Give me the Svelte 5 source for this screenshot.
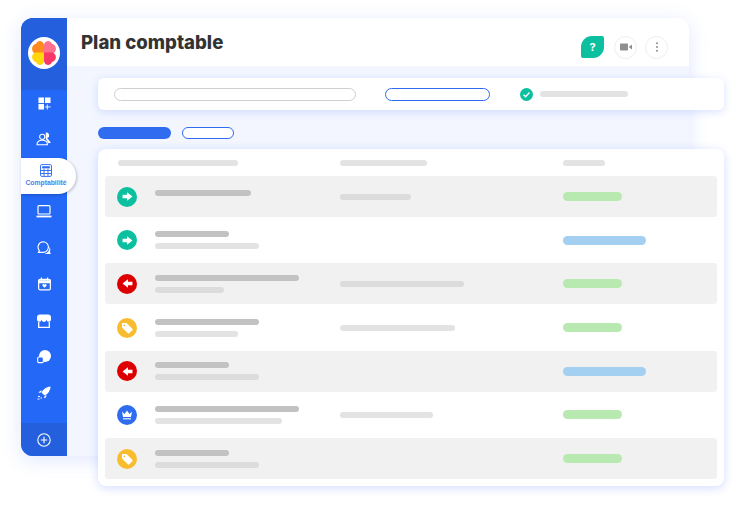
<script>
  const rows = [
    { icon: 'in', a: 96, b: 0, c: 71, pill: 'green' },
    { icon: 'in', a: 74, b: 104, c: 0, pill: 'blue' },
    { icon: 'out', a: 144, b: 69, c: 124, pill: 'green' },
    { icon: 'tag', a: 104, b: 83, c: 115, pill: 'green' },
    { icon: 'out', a: 74, b: 104, c: 0, pill: 'blue' },
    { icon: 'crown', a: 144, b: 127, c: 93, pill: 'green' },
    { icon: 'tag', a: 74, b: 104, c: 0, pill: 'green' }
  ];
</script>

<div class="page">
  <div class="window">
    <aside class="sidebar">
      <div class="logo-block">
        <div class="logo">
          <svg viewBox="0 0 24 24" width="26" height="26">
            <path d="M12 12.500 L5 12.500 C2.500 12.500 1 10.300 1 8 C1 5.500 2.800 3.800 4.800 3.500 C5.200 1.800 7 1 8.300 1 C10.800 1 12 3 12 5.500Z" fill="#ff8a1e"/>
            <path d="M12 12.500 L19 12.500 C21.500 12.500 23 10.300 23 8 C23 5.500 21.200 3.800 19.200 3.500 C18.800 1.800 17 1 15.700 1 C13.200 1 12 3 12 5.500Z" fill="#ff6f8e"/>
            <path d="M12 11.500 L5 11.500 C2.500 11.500 1 13.700 1 16 C1 18.500 2.800 20.200 4.800 20.500 C5.200 22.200 7 23 8.300 23 C10.800 23 12 21 12 18.500Z" fill="#ffd60a"/>
            <path d="M12 11.500 L19 11.500 C21.500 11.500 23 13.700 23 16 C23 18.500 21.200 20.200 19.200 20.500 C18.800 22.200 17 23 15.700 23 C13.200 23 12 21 12 18.500Z" fill="#f9386a"/>
          </svg>
        </div>
      </div>
      <nav class="nav">
        <div class="item">
          <svg viewBox="0 0 14 14" width="13" height="13" fill="#fff"><rect x="0.500" y="0.500" width="6" height="6"/><rect x="7.500" y="0.500" width="6" height="6"/><rect x="0.500" y="7.500" width="6" height="6"/><path d="M10 8v5.500M7.500 10.700h6" stroke="#fff" fill="none"/></svg>
        </div>
        <div class="item">
          <svg viewBox="0 0 18 16" width="16" height="14" fill="none" stroke="#fff" stroke-width="1.200"><circle cx="7" cy="5.500" r="3"/><path d="M1 14.500c0-3.500 2.500-5 6-5s6 1.500 6 5z"/><path d="M11 0.800a3 3 0 0 1 1.500 6l4.500 5.500-3 .5-3-5z" fill="#fff" stroke="none"/></svg>
        </div>
        <div class="item active">
          <svg viewBox="0 0 14 15" width="12" height="13" fill="none" stroke="#2f6cf0" stroke-width="1.100"><rect x="0.600" y="0.600" width="12.800" height="13.800" rx="1.500"/><rect x="2.500" y="2.500" width="9" height="2.500" fill="#2f6cf0" stroke="none"/><path d="M0.700 7.500h12.600M0.700 11h12.600M4.700 5.500v9M9.300 5.500v9"/></svg>
          <span>Comptabilité</span>
        </div>
        <div class="item">
          <svg viewBox="0 0 16 13" width="16" height="13" fill="none" stroke="#fff" stroke-width="1.200"><rect x="2" y="0.700" width="12" height="8.300" rx="1"/><path d="M0.500 11.500h15" stroke-width="1.800"/></svg>
        </div>
        <div class="item">
          <svg viewBox="0 0 16 15" width="15" height="14"><path d="M6.500 0.800a5.700 5.700 0 0 1 0 11.400H1.500l1-2A5.700 5.700 0 0 1 6.500 .8z" fill="none" stroke="#fff" stroke-width="1.200"/><path d="M13.300 6a6.800 6.800 0 0 1-5.300 7.800h6.800L13.900 12A6.500 6.500 0 0 0 13.300 6z" fill="#fff"/></svg>
        </div>
        <div class="item">
          <svg viewBox="0 0 14 14" width="13" height="14" fill="none" stroke="#fff" stroke-width="1.300"><rect x="0.700" y="2" width="12.600" height="11.300" rx="1.500"/><path d="M0.700 3.500h12.600v2H0.700z" fill="#fff"/><path d="M3.700 0v3M10.300 0v3"/><path d="M7 11 4.800 8.800a1.200 1.200 0 0 1 2.200-1 1.200 1.200 0 0 1 2.200 1z" fill="#fff" stroke="none"/></svg>
        </div>
        <div class="item">
          <svg viewBox="0 0 14 14" width="14" height="14" fill="none" stroke="#fff" stroke-width="1.300"><path d="M3 0.500h8a3 3 0 0 1 3 3v2a2.300 2.300 0 0 1-4.600 0 2.400 2.400 0 0 1-4.800 0 2.300 2.300 0 0 1-4.600 0v-2a3 3 0 0 1 3-3z" fill="#fff" stroke="none"/><path d="M1.700 8v5.300h10.600V8"/></svg>
        </div>
        <div class="item">
          <svg viewBox="0 0 14 14" width="14" height="14"><circle cx="8" cy="6" r="6" fill="#fff"/><rect x="0.700" y="7" width="5.600" height="5.600" rx="1.200" fill="#2468f8" stroke="#fff" stroke-width="1.100"/></svg>
        </div>
        <div class="item">
          <svg viewBox="0 0 14 14" width="14" height="14" fill="#fff"><path d="M13.600 0.400C9.500 .6 6.500 2.500 4.500 6.500L7.500 9.500C11.500 7.500 13.400 4.500 13.600.4z"/><path d="M3.800 6.500 1.500 7l1.600-2.300h2zM7.500 10.200l-.5 2.300 2.300-1.600v-2z"/><path d="M1 10h2v1H1zM3.500 11.500h1.500v1H3.500zM.5 12.500h2v1h-2z"/></svg>
        </div>
      </nav>
      <div class="add">
        <svg viewBox="0 0 14 14" width="14" height="14" fill="none" stroke="#fff" stroke-width="1.100"><circle cx="7" cy="7" r="6.200"/><path d="M7 3.800v6.400M3.800 7h6.400"/></svg>
      </div>
    </aside>

    <main class="main">
      <header class="top">
        <h1>Plan comptable</h1>
        <div class="actions">
          <div class="help">?</div>
          <div class="round">
            <svg viewBox="0 0 12 8" width="12" height="8" fill="#8f8f8f"><rect x="0" y="0.500" width="8" height="7" rx="0.800"/><path d="M8.700 4 12 1.500v5z"/></svg>
          </div>
          <div class="round">
            <svg viewBox="0 0 4 10" width="4" height="10" fill="#8f8f8f"><circle cx="2" cy="1.300" r="1"/><circle cx="2" cy="5" r="1"/><circle cx="2" cy="8.700" r="1"/></svg>
          </div>
        </div>
      </header>

      <div class="content">
        <section class="filters">
          <div class="search"></div>
          <div class="select"></div>
          <div class="check">
            <svg viewBox="0 0 14 14" width="13" height="13"><circle cx="7" cy="7" r="7" fill="#0bbf9f"/><path d="M3.800 7.200 6 9.400l4.200-4.600" fill="none" stroke="#fff" stroke-width="1.500"/></svg>
          </div>
          <div class="bar filter-bar"></div>
        </section>

        <div class="tabs">
          <div class="tab-on"></div>
          <div class="tab-off"></div>
        </div>

        <section class="table">
          <div class="thead">
            <div class="col-first"><div class="bar head" style="width: 120px"></div></div>
            <div class="col-mid"><div class="bar head" style="width: 87px"></div></div>
            <div class="col-last"><div class="bar head" style="width: 42px"></div></div>
          </div>
          <div class="rows">
            {#each rows as row, i}
              <div class="row" class:shaded={i % 2 === 0}>
                <div class="badge {row.icon}">
                  {#if row.icon === 'in'}
                    <svg viewBox="0 0 12 10" width="11" height="9" fill="#fff"><path d="M0.500 3h5V0.300L11.500 5l-6 4.700V7h-5z"/></svg>
                  {:else if row.icon === 'out'}
                    <svg viewBox="0 0 12 10" width="11" height="9" fill="#fff"><path d="M11.500 3h-5V0.300L.5 5l6 4.700V7h5z"/></svg>
                  {:else if row.icon === 'tag'}
                    <svg viewBox="0 0 12 12" width="12" height="12" fill="#fff"><path d="M1 1h4.500L11.300 6.800a1 1 0 0 1 0 1.400L8.200 11.300a1 1 0 0 1-1.400 0L1 5.500z"/><circle cx="3.300" cy="3.300" r="0.900" fill="#f8bd2f"/></svg>
                  {:else}
                    <svg viewBox="0 0 12 10" width="12" height="10"><path d="M1 1.500 3.500 4 6 .5 8.500 4 11 1.500 10 7H2z" fill="#fff"/><rect x="2" y="8" width="8" height="1.500" fill="#c3d4fb"/></svg>
                  {/if}
                </div>
                <div class="names">
                  <div class="bar dark" style="width: {row.a}px"></div>
                  {#if row.b}<div class="bar light" style="width: {row.b}px"></div>{/if}
                </div>
                <div class="mid">
                  {#if row.c}<div class="bar light" style="width: {row.c}px"></div>{/if}
                </div>
                <div class="status {row.pill}"></div>
              </div>
            {/each}
          </div>
        </section>
      </div>
    </main>
  </div>
</div>

<style>
  :global(body) {
    margin: 0;
    background: #fff;
  }

  .page {
    width: 746px;
    height: 506px;
    padding: 18px 0 0 21px;
    box-sizing: border-box;
    overflow: hidden;
    font-family: Inter, "Liberation Sans", sans-serif;
  }

  .window {
    display: flex;
    width: 668px;
    height: 438px;
    border-radius: 12px;
    box-shadow: 0 4px 20px rgba(70, 110, 255, 0.16);
  }

  .sidebar {
    width: 46px;
    flex: none;
    display: flex;
    flex-direction: column;
    background: #2468f8;
    border-radius: 12px 0 0 12px;
  }

  .logo-block {
    height: 72px;
    flex: none;
    display: flex;
    align-items: center;
    justify-content: center;
    background: #2460dd;
    border-radius: 12px 0 0 0;
    box-sizing: border-box;
    padding-bottom: 2px;
  }

  .logo {
    width: 32px;
    height: 32px;
    border-radius: 50%;
    background: #fff;
    display: flex;
    align-items: center;
    justify-content: center;
  }

  .nav {
    flex: 1;
    margin-top: -5px;
  }

  .item {
    height: 36.300px;
    display: flex;
    flex-direction: column;
    align-items: center;
    justify-content: center;
  }

  .item.active {
    position: relative;
    z-index: 2;
    width: 55px;
    height: 36px;
    box-sizing: border-box;
    padding-right: 5px;
    background: #fff;
    border-radius: 0 18px 18px 0;
    box-shadow: 1px 1px 3px rgba(0, 0, 0, 0.22);
    gap: 2px;
  }

  .item.active span {
    font-family: "Liberation Sans", sans-serif;
    font-size: 6.800px;
    font-weight: 700;
    color: #4a7ff0;
    white-space: nowrap;
    line-height: 8px;
  }

  .add {
    height: 33px;
    flex: none;
    display: flex;
    align-items: center;
    justify-content: center;
    background: #2460dd;
    border-radius: 0 0 0 12px;
  }

  .main {
    flex: 1;
    min-width: 0;
    display: flex;
    flex-direction: column;
    background: #f3f6ff;
    border-radius: 0 12px 12px 0;
  }

  .top {
    height: 48px;
    flex: none;
    display: flex;
    align-items: center;
    justify-content: space-between;
    padding: 0 21px 0 14px;
    background: #fff;
    border-radius: 0 12px 0 0;
  }

  h1 {
    margin: 0 0 1px;
    font-size: 18.600px;
    font-weight: 800;
    color: #333;
    white-space: nowrap;
  }

  .actions {
    display: flex;
    align-items: center;
    gap: 8px;
    margin-top: 10px;
  }

  .help {
    width: 23px;
    height: 22px;
    margin-right: 2px;
    background: #0bbf9f;
    border-radius: 11px 2px 11px 2px;
    color: #fff;
    font-size: 11px;
    font-weight: 700;
    display: flex;
    align-items: center;
    justify-content: center;
  }

  .round {
    width: 23px;
    height: 23px;
    box-sizing: border-box;
    border-radius: 50%;
    border: 1.500px solid #eeeeee;
    background: #fff;
    display: flex;
    align-items: center;
    justify-content: center;
  }

  .content {
    padding: 12px 0 0 31px;
    width: 626px;
  }

  .filters {
    width: 626px;
    height: 32px;
    background: #fff;
    border-radius: 6px;
    box-shadow: 0 2px 8px rgba(70, 110, 255, 0.2);
    display: flex;
    align-items: center;
    box-sizing: border-box;
    padding-left: 16px;
  }

  .search {
    width: 242px;
    height: 13px;
    border: 1px solid #cfcfcf;
    border-radius: 7px;
    box-sizing: border-box;
  }

  .select {
    width: 105px;
    height: 13px;
    margin-left: 29px;
    border: 1px solid #2f6cf0;
    border-radius: 7px;
    box-sizing: border-box;
  }

  .check {
    margin-left: 30px;
    display: flex;
  }

  .bar {
    height: 6px;
    border-radius: 3px;
  }

  .filter-bar {
    width: 88px;
    margin-left: 7px;
    background: #e3e3e3;
  }

  .tabs {
    display: flex;
    align-items: center;
    gap: 11px;
    margin-top: 17px;
  }

  .tab-on {
    width: 73px;
    height: 12px;
    border-radius: 6px;
    background: #2f6cf0;
  }

  .tab-off {
    width: 52px;
    height: 12px;
    box-sizing: border-box;
    border: 1px solid #2f6cf0;
    border-radius: 6px;
    background: #fff;
  }

  .table {
    width: 626px;
    height: 337px;
    margin-top: 10px;
    background: #fff;
    border-radius: 8px;
    box-shadow: 0 2px 10px rgba(70, 110, 255, 0.24);
    box-sizing: border-box;
    padding: 0 7px;
  }

  .thead {
    height: 27px;
    display: flex;
    align-items: center;
    box-sizing: border-box;
  }

  .thead .bar {
    background: #e3e3e3;
  }

  .col-first {
    width: 235px;
    padding-left: 13px;
    box-sizing: border-box;
  }

  .col-mid {
    width: 223px;
  }

  .rows {
    display: flex;
    flex-direction: column;
    gap: 2.700px;
  }

  .row {
    height: 41px;
    display: flex;
    align-items: center;
    border-radius: 3px;
  }

  .row.shaded {
    background: #f1f1f1;
  }

  .badge {
    width: 20px;
    height: 20px;
    flex: none;
    margin-left: 12px;
    border-radius: 50%;
    display: flex;
    align-items: center;
    justify-content: center;
  }

  .badge.in { background: #0bbf9f; }
  .badge.out { background: #dd0000; }
  .badge.tag { background: #f8bd2f; }
  .badge.crown { background: #2f6cf0; }

  .names {
    width: 185px;
    margin-left: 18px;
    flex: none;
    display: flex;
    flex-direction: column;
    gap: 6px;
  }

  .row:first-child .names {
    margin-bottom: 8px;
  }

  .bar.dark { background: #c2c2c2; }
  .bar.light { background: #e3e3e3; }
  .shaded .bar.light { background: #dcdcdc; }

  .mid {
    width: 223px;
    flex: none;
  }

  .status {
    height: 9px;
    border-radius: 5px;
  }

  .status.green {
    width: 59px;
    background: #b8e9b0;
  }

  .status.blue {
    width: 83px;
    background: #a3cff0;
  }
</style>
